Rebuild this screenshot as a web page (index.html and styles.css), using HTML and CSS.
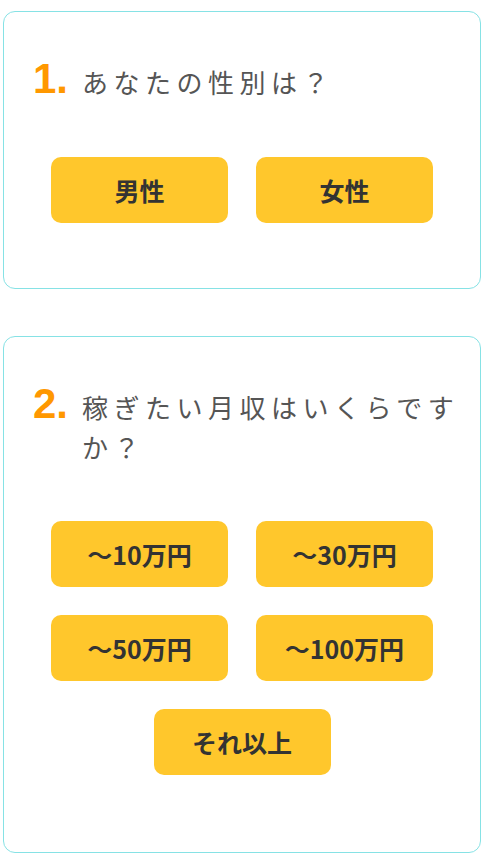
FILE: index.html
```html
<!DOCTYPE html>
<html lang="ja">
<head>
<meta charset="UTF-8" />
<meta name="viewport" content="width=device-width, initial-scale=1" />
<title>診断</title>
<link rel="stylesheet" href="styles.css">
</head>
<body>

<section class="q-card">
  <h2 class="q-title">
    <span class="q-num">1.</span>
    <span class="q-text">あなたの性別は？</span>
  </h2>
  <div class="choices">
    <button class="choice">男性</button>
    <button class="choice">女性</button>
  </div>
</section>

<section class="q-card q-card--last">
  <h2 class="q-title">
    <span class="q-num">2.</span>
    <span class="q-text">稼ぎたい月収はいくらですか？</span>
  </h2>
  <div class="choices">
    <button class="choice">〜10万円</button>
    <button class="choice">〜30万円</button>
    <button class="choice">〜50万円</button>
    <button class="choice">〜100万円</button>
    <button class="choice">それ以上</button>
  </div>
</section>

</body>
</html>
```

FILE: styles.css
```css
:root {
  --border-color: #86e2e5;
  --accent-color: #ff9800;
  --text-color: #555555;
  --button-bg: #ffc72c;
  --button-text: #333333;
}
body {
  margin: 0;
  padding: 11px 7px 0 3px;
  background: #ffffff;
  font-family: "Noto Sans CJK JP", "Noto Sans", sans-serif;
}
.q-card {
  border: 1px solid var(--border-color);
  border-radius: 12px;
  padding: 50px 10px 65px 29px;
}
.q-card + .q-card {
  margin-top: 47px;
}
.q-card--last {
  padding-bottom: 77px;
}
.q-title {
  display: flex;
  align-items: baseline;
  margin: 0 0 55px;
  font-weight: normal;
}
.q-card--last .q-title {
  margin-bottom: 54px;
}
.q-num {
  flex: 0 0 49px;
  font-family: "Liberation Sans", sans-serif;
  font-weight: bold;
  font-size: 42px;
  line-height: 34px;
  color: var(--accent-color);
}
.q-text {
  font-size: 26px;
  line-height: 40px;
  letter-spacing: 5.5px;
  color: var(--text-color);
}
.choices {
  display: flex;
  flex-wrap: wrap;
  justify-content: center;
  gap: 28px;
  width: 382px;
  margin-left: 18px;
}
.choice {
  width: 177px;
  height: 66px;
  border: none;
  border-radius: 10px;
  background-color: var(--button-bg);
  color: var(--button-text);
  font-family: "Noto Sans CJK JP", sans-serif;
  font-weight: bold;
  font-size: 25px;
  cursor: pointer;
}
```
